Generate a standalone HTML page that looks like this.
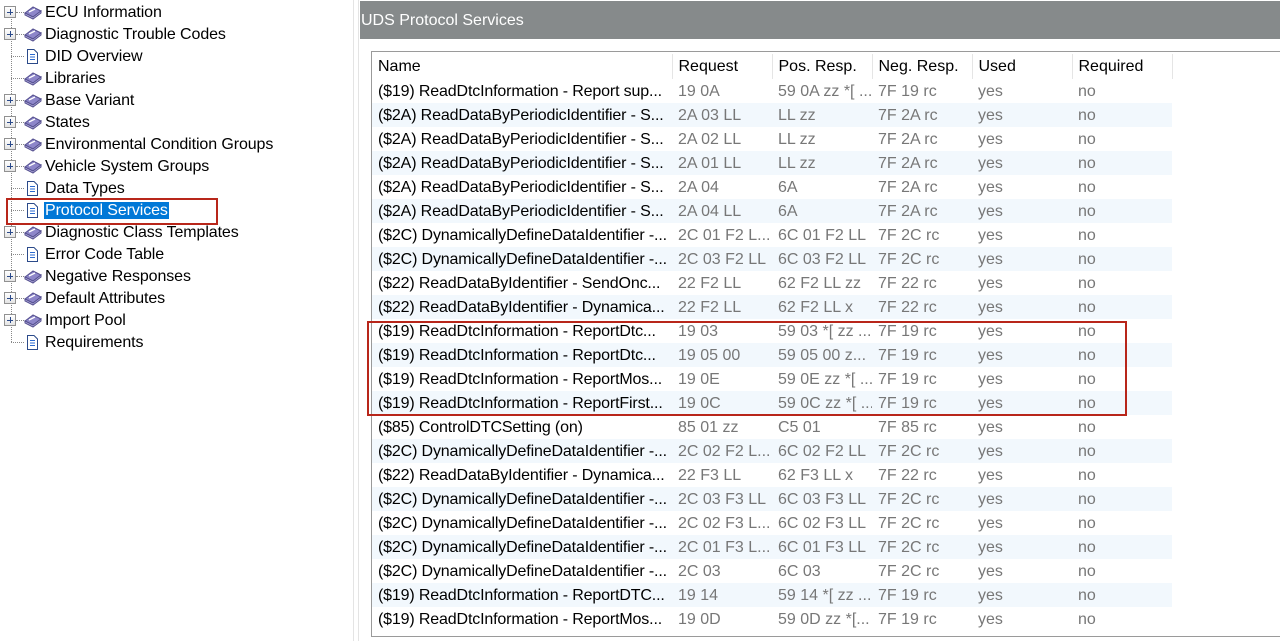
<!DOCTYPE html>
<html><head><meta charset="utf-8"><style>
*{margin:0;padding:0;box-sizing:border-box}
body{width:1280px;height:641px;overflow:hidden;background:#fff;font-family:"Liberation Sans",Arial,sans-serif;font-size:16px;color:#000;position:relative}
.tr{position:absolute;left:0;height:22px;width:350px}
.tr .t{position:absolute;left:45px;top:3px;line-height:18px;white-space:nowrap;letter-spacing:-0.1px}
.tr .ic{position:absolute;left:24px;top:3px}
.pl{position:absolute;left:4px;top:5px;width:12px;height:12px;border:1px solid #919191;background:linear-gradient(#fff,#e4e4e4)}
.pl:before{content:"";position:absolute;left:2px;top:4.5px;width:6px;height:1px;background:#2b4a8a}
.pl:after{content:"";position:absolute;left:4.5px;top:2px;width:1px;height:6px;background:#2b4a8a}
.hd{position:absolute;left:16px;top:11px;width:8px;border-top:1px dotted #888}
.hd2{position:absolute;left:11px;top:11px;width:13px;border-top:1px dotted #888}
.sel{background:#0078d7;color:#fff;padding:0 1px;margin-left:-1px}
table{border-collapse:collapse;position:absolute;left:372px;top:54px;font-size:16px;table-layout:fixed;width:800px}
td{height:24px;padding:2px 0 0 6px;white-space:nowrap;color:#777;overflow:hidden}
td.n{color:#000;letter-spacing:-0.15px}
th{height:25px;font-weight:normal;text-align:left;padding:0 0 0 6px;border-right:1px solid #e5e5e5;color:#000}
tr.a td{background:#f2f8fd}
</style></head><body>
<div style="position:absolute;left:11px;top:12px;height:330px;border-left:1px dotted #888"></div>
<div style="position:absolute;left:353px;top:0;width:1px;height:641px;background:#e4e4e4"></div>
<div style="position:absolute;left:358px;top:0;width:1px;height:641px;background:#e4e4e4"></div>
<div style="position:absolute;left:360px;top:1px;width:920px;height:38px;background:#868a8b;color:#fff;font-size:16px;line-height:40px;padding-left:1px">UDS Protocol Services</div>
<div style="position:absolute;left:371px;top:51px;width:909px;height:586px;border:1px solid #9a9a9a;border-right:none"></div>
<div id="tree" style="position:absolute;left:0;top:1px;width:350px;height:360px"></div>
<table id="tb"><col style="width:300px"><col style="width:100px"><col style="width:100px"><col style="width:100px"><col style="width:100px"><col style="width:100px"><tr><th>Name</th><th>Request</th><th>Pos. Resp.</th><th>Neg. Resp.</th><th>Used</th><th>Required</th></tr></table>
<div style="position:absolute;left:6px;top:198px;width:212px;height:27px;border:2px solid #b8261a"></div>
<div style="position:absolute;left:367px;top:321px;width:760px;height:95px;border:2px solid #b8261a"></div>
<script>
var book='<svg width="18" height="16" viewBox="0 0 18 16"><path d="M1 9 L9 3 L17 7 L9 13 Z" fill="#8d86c9" stroke="#55508f"/><path d="M1 9 L1 11 L9 15 L17 9 L17 7 L9 13 Z" fill="#b6b1e0" stroke="#55508f"/><path d="M5 8 L11 5" stroke="#fff" stroke-width="1.3"/></svg>';
var page='<svg width="16" height="16" viewBox="0 0 16 16"><path d="M3.5 1.5 H10 L13.5 5 V15.5 H3.5 Z" fill="#fff" stroke="#2b4a8a"/><path d="M6 6.5H11M6 9H11M6 11.5H11" stroke="#2b6ad0"/></svg>';
var items=[["ECU Information",1,1],["Diagnostic Trouble Codes",1,1],["DID Overview",0,0],["Libraries",0,1],["Base Variant",1,1],["States",1,1],["Environmental Condition Groups",1,1],["Vehicle System Groups",1,1],["Data Types",0,0],["Protocol Services",0,0],["Diagnostic Class Templates",1,1],["Error Code Table",0,0],["Negative Responses",1,1],["Default Attributes",1,1],["Import Pool",1,1],["Requirements",0,0]];
var h='';items.forEach(function(it,i){h+='<div class="tr" style="top:'+(i*22)+'px">'+(it[1]?'<div class="hd"></div><div class="pl"></div>':'<div class="hd2"></div>')+'<span class="ic">'+(it[2]?book:page)+'</span><span class="t">'+(i==9?'<span class="sel">'+it[0]+'</span>':it[0])+'</span></div>';});
document.getElementById('tree').innerHTML=h;
var rows=[["($19) ReadDtcInformation - Report sup...","19 0A","59 0A zz *[ ...","7F 19 rc"],["($2A) ReadDataByPeriodicIdentifier - S...","2A 03 LL","LL zz","7F 2A rc"],["($2A) ReadDataByPeriodicIdentifier - S...","2A 02 LL","LL zz","7F 2A rc"],["($2A) ReadDataByPeriodicIdentifier - S...","2A 01 LL","LL zz","7F 2A rc"],["($2A) ReadDataByPeriodicIdentifier - S...","2A 04","6A","7F 2A rc"],["($2A) ReadDataByPeriodicIdentifier - S...","2A 04 LL","6A","7F 2A rc"],["($2C) DynamicallyDefineDataIdentifier -...","2C 01 F2 L...","6C 01 F2 LL","7F 2C rc"],["($2C) DynamicallyDefineDataIdentifier -...","2C 03 F2 LL","6C 03 F2 LL","7F 2C rc"],["($22) ReadDataByIdentifier - SendOnc...","22 F2 LL","62 F2 LL zz","7F 22 rc"],["($22) ReadDataByIdentifier - Dynamica...","22 F2 LL","62 F2 LL x","7F 22 rc"],["($19) ReadDtcInformation - ReportDtc...","19 03","59 03 *[ zz ...","7F 19 rc"],["($19) ReadDtcInformation - ReportDtc...","19 05 00","59 05 00 z...","7F 19 rc"],["($19) ReadDtcInformation - ReportMos...","19 0E","59 0E zz *[ ...","7F 19 rc"],["($19) ReadDtcInformation - ReportFirst...","19 0C","59 0C zz *[ ...","7F 19 rc"],["($85) ControlDTCSetting (on)","85 01 zz","C5 01","7F 85 rc"],["($2C) DynamicallyDefineDataIdentifier -...","2C 02 F2 L...","6C 02 F2 LL","7F 2C rc"],["($22) ReadDataByIdentifier - Dynamica...","22 F3 LL","62 F3 LL x","7F 22 rc"],["($2C) DynamicallyDefineDataIdentifier -...","2C 03 F3 LL","6C 03 F3 LL","7F 2C rc"],["($2C) DynamicallyDefineDataIdentifier -...","2C 02 F3 L...","6C 02 F3 LL","7F 2C rc"],["($2C) DynamicallyDefineDataIdentifier -...","2C 01 F3 L...","6C 01 F3 LL","7F 2C rc"],["($2C) DynamicallyDefineDataIdentifier -...","2C 03","6C 03","7F 2C rc"],["($19) ReadDtcInformation - ReportDTC...","19 14","59 14 *[ zz ...","7F 19 rc"],["($19) ReadDtcInformation - ReportMos...","19 0D","59 0D zz *[...","7F 19 rc"]];
var t='';rows.forEach(function(r,i){t+='<tr'+(i%2?' class="a"':'')+'><td class="n">'+r[0]+'</td><td>'+r[1]+'</td><td>'+r[2]+'</td><td>'+r[3]+'</td><td>yes</td><td>no</td></tr>';});
document.getElementById('tb').insertAdjacentHTML('beforeend',t);
</script>
</body></html>
